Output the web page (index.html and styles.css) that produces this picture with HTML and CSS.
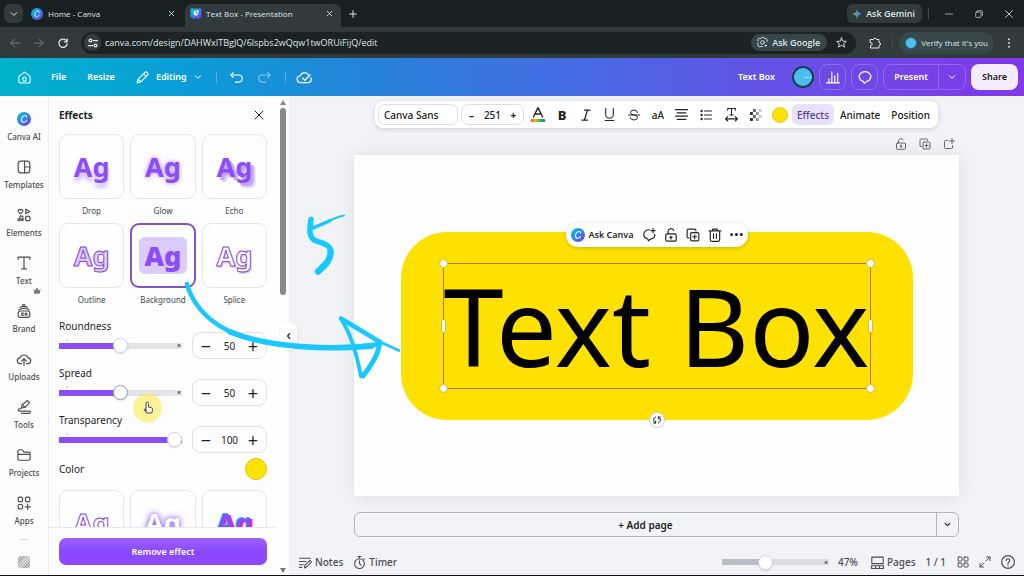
FILE: index.html
```html
<!DOCTYPE html>
<html lang="en">
<head>
<meta charset="utf-8">
<title>Text Box - Presentation</title>
<link rel="stylesheet" href="styles.css">
</head>
<body>
<svg class="defs" aria-hidden="true">
  <defs>
    <linearGradient id="brand" x1="0" y1="0" x2="1" y2="1"><stop offset="0" stop-color="#00c9d6"/><stop offset=".5" stop-color="#2f86f0"/><stop offset="1" stop-color="#7d2ae8"/></linearGradient>
    <linearGradient id="rainbow"><stop offset="0" stop-color="#ff3b30"/><stop offset=".3" stop-color="#ffb400"/><stop offset=".6" stop-color="#3fc34a"/><stop offset="1" stop-color="#2563ff"/></linearGradient>
    <linearGradient id="gem"><stop offset="0" stop-color="#f0654a"/><stop offset=".4" stop-color="#5aa05c"/><stop offset=".6" stop-color="#4a8df8"/><stop offset="1" stop-color="#4a8df8"/></linearGradient>
    <symbol id="canva" viewBox="0 0 24 24"><circle cx="12" cy="12" r="12" fill="url(#brand)" stroke="none"/><path d="M16.500 9c.4-2-1-3.300-3-3.100-3.400.300-6 4-5.700 7.600.200 2.600 1.700 4.200 3.900 4.100 2-.1 3.600-1.400 4.600-3.200" stroke="#fff" stroke-width="1.800" fill="none"/></symbol>
    <symbol id="close" viewBox="0 0 24 24"><path d="M4 4l16 16M20 4L4 20"/></symbol>
    <symbol id="down" viewBox="0 0 24 24"><path d="M4 8l8 8 8-8"/></symbol>
    <symbol id="lock" viewBox="0 0 24 24"><rect x="3" y="10" width="18" height="12.500" rx="2"/><path d="M7 10V6a5 5 0 0 1 9.500-2M12 14v5M10 16h4"/></symbol>
    <symbol id="copy" viewBox="0 0 24 24"><rect x="8" y="8" width="14" height="14" rx="2"/><path d="M5 17H4a2 2 0 0 1-2-2V4a2 2 0 0 1 2-2h11a2 2 0 0 1 2 2v1M15 11.500v7M11.500 15h7"/></symbol>
  </defs>
</svg>
<div class="window">
  <div class="tabs">
    <button class="tab-menu" aria-label="Search tabs"><svg class="i8 bold"><use href="#down"/></svg></button>
    <div class="tab"><svg class="i12"><use href="#canva"/></svg><span>Home - Canva</span><button aria-label="Close tab"><svg class="i7 bold"><use href="#close"/></svg></button></div>
    <div class="tab current"><svg class="i12" viewBox="0 0 24 24"><path d="M3 1h18a2 2 0 0 1 2 2v14a2 2 0 0 1-2 2h-3l1 4-7-3-7 3 1-4H3a2 2 0 0 1-2-2V3a2 2 0 0 1 2-2z" fill="url(#brand)" stroke="none"/><path d="M11 5a5 5 0 1 0 6 6h-6z M13 4v5h5a5 5 0 0 0-5-5z" fill="#fff" stroke="none"/></svg><span>Text Box - Presentation</span><button aria-label="Close tab"><svg class="i7 bold"><use href="#close"/></svg></button></div>
    <button class="new-tab" aria-label="New tab"><svg class="i8 bold" viewBox="0 0 24 24"><path d="M12 2v20M2 12h20"/></svg></button>
    <button class="gemini"><svg class="i10" viewBox="0 0 24 24"><path d="M12 0c1 7 5 11 12 12-7 1-11 5-12 12-1-7-5-11-12-12C7 11 11 7 12 0z" fill="url(#gem)" stroke="none"/></svg>Ask Gemini</button>
    <i class="sep"></i>
    <div class="win-buttons">
      <button aria-label="Minimize"><svg class="i8" viewBox="0 0 24 24"><path d="M1 12h22"/></svg></button>
      <button aria-label="Restore"><svg class="i8" viewBox="0 0 24 24"><rect x="2" y="6" width="16" height="16" rx="3"/><path d="M7 2h11a4 4 0 0 1 4 4v11"/></svg></button>
      <button aria-label="Close"><svg class="i10"><use href="#close"/></svg></button>
    </div>
  </div>
  <div class="address">
    <div class="nav">
      <button class="off" aria-label="Back"><svg class="i10" viewBox="0 0 24 24"><path d="M23 12H2M11 3l-9 9 9 9"/></svg></button>
      <button class="off" aria-label="Forward"><svg class="i10" viewBox="0 0 24 24"><path d="M1 12h21M13 3l9 9-9 9"/></svg></button>
      <button aria-label="Reload"><svg class="i10 bold" viewBox="0 0 24 24"><path d="M21 8a10 10 0 1 0 1 6M22 2v7h-7"/></svg></button>
    </div>
    <div class="omnibox">
      <button class="site" aria-label="Site information"><svg class="i10 bold" viewBox="0 0 24 24"><circle cx="6" cy="6" r="3.500"/><path d="M13 6h10M1 18h10"/><circle cx="18" cy="18" r="3.500"/></svg></button>
      <input type="text" aria-label="Address" value="canva.com/design/DAHWxITBgJQ/6lspbs2wQqw1twORUiFijQ/edit">
      <button class="ask-google"><svg class="i11" viewBox="0 0 24 24"><path d="M8 3l2-2h4l2 2M2 9V6a3 3 0 0 1 3-3h3M16 3h3a3 3 0 0 1 3 3v4M2 13v5a3 3 0 0 0 3 3h7"/><circle cx="12" cy="12" r="4"/><circle cx="19" cy="19" r="1.500"/></svg>Ask Google</button>
      <button class="star" aria-label="Bookmark"><svg class="i11" viewBox="0 0 24 24"><path d="M12 2l3 7 7.500.600-5.700 5 1.700 7.400L12 18l-6.500 4 1.700-7.400-5.700-5L9 9z"/></svg></button>
    </div>
    <button class="puzzle" aria-label="Extensions"><svg class="i12" viewBox="0 0 24 24"><path d="M3 5h6a3 2.500 0 0 1 6 0h5v6a3 3 0 0 1 0 6v5H3v-5a3.500 3 0 0 0 0-6z"/></svg></button>
    <i class="sep"></i>
    <button class="verify"><i class="mini-avatar"></i>Verify that it's you</button>
    <button class="menu" aria-label="Menu"><svg class="i10" viewBox="0 0 24 24"><g fill="currentColor" stroke="none"><circle cx="12" cy="3" r="2.200"/><circle cx="12" cy="12" r="2.200"/><circle cx="12" cy="21" r="2.200"/></g></svg></button>
  </div>

  <header class="topbar">
    <button class="home" aria-label="Home"><svg class="i13" viewBox="0 0 24 24"><path d="M12 2L3 8.500Q1.500 10 1.500 12v7a3 3 0 0 0 3 3h15a3 3 0 0 0 3-3v-7q0-2-1.500-3.500z"/><rect x="9" y="11" width="6" height="8" rx="3"/></svg></button>
    <button class="file">File</button>
    <button class="resize">Resize</button>
    <button class="editing"><svg class="i13" viewBox="0 0 24 24"><path d="M2 22l2-7L17 2q2-1 4 1t1 4L9 20zM14 5l5 5M4 15l5 5"/></svg>Editing<svg class="i8 bold"><use href="#down"/></svg></button>
    <i class="sep"></i>
    <button class="undo" aria-label="Undo"><svg class="i13" viewBox="0 0 24 24"><path d="M6 3L1.500 7.500 6 12M1.500 7.500H16a6 6 0 0 1 0 13h-6"/></svg></button>
    <button class="redo" aria-label="Redo"><svg class="i13" viewBox="0 0 24 24"><path d="M18 3l4.500 4.500L18 12M22.500 7.500H8a6 6 0 0 0 0 13h6"/></svg></button>
    <i class="sep"></i>
    <button class="saved" aria-label="Saved"><svg class="i15" viewBox="0 0 24 24"><path d="M18.500 8A7.500 7.500 0 0 0 5 9.500 5.200 5.200 0 0 0 6 20h12a5 5 0 0 0 4.500-7M9 13l3.500 3.500L21 8"/></svg></button>
    <span class="doc-title">Text Box</span>
    <button class="avatar" aria-label="Account"></button>
    <button class="outlined" aria-label="Insights"><svg class="i14" viewBox="0 0 24 24"><path d="M1 22h22M5 22v-7M10 22V3M15 22V10M20 22V6"/></svg></button>
    <button class="outlined" aria-label="Comments"><svg class="i14" viewBox="0 0 24 24"><path d="M9 19.500a10 8.500 0 1 1 6 0l-4 3.500z"/></svg></button>
    <div class="present"><button>Present</button><button aria-label="Present options"><svg class="i8 bold"><use href="#down"/></svg></button></div>
    <button class="share">Share</button>
  </header>

  <div class="workspace">
    <nav class="rail">
      <button><svg class="i14"><use href="#canva"/></svg>Canva AI</button>
      <button><svg class="i14" viewBox="0 0 24 24"><rect x="2" y="2" width="20" height="20" rx="5"/><path d="M13 2v20M13 12h9"/></svg>Templates</button>
      <button><svg class="i14" viewBox="0 0 24 24"><path d="M6 10L2.500 6.500a2.300 2.300 0 0 1 3.500-3 2.300 2.300 0 0 1 3.500 3zM15 2l7 4-7 4zM5 20v-6h5v6"/><circle cx="3.500" cy="20" r="2"/><circle cx="9" cy="20" r="1.500"/><circle cx="18.500" cy="18" r="4"/></svg>Elements</button>
      <button><svg class="i14" viewBox="0 0 24 24"><path d="M2 6V2h20v4M12 2v20M8 22h8"/></svg>Text</button>
      <button class="pro"><svg class="i14" viewBox="0 0 24 24"><rect x="2" y="12" width="20" height="11" rx="4"/><path d="M3 10q9-5 18 0M5 6q7-4 13 0M9 2q3-2 5 0M11 16a2 2 0 1 0 0 3"/><circle cx="15.500" cy="17.500" r="1.800"/></svg>Brand<svg class="crown i8" viewBox="0 0 24 24"><path d="M1 5l5 6 6-10 6 10 5-6-3 15H4z" fill="currentColor" stroke="none"/></svg></button>
      <button><svg class="i14" viewBox="0 0 24 24"><path d="M8 20H6a5 5 0 0 1-1-10 7.500 7.500 0 0 1 14 0 5 5 0 0 1-1 10h-2M12 23V12M8 15.500l4-4 4 4"/></svg>Uploads</button>
      <button><svg class="i14" viewBox="0 0 24 24"><path d="M7 14l2-6 9-7 3.500 3.500-8 8zM9 8l5 5M6 15H4a2 2 0 0 0 0 4h17a2 2 0 0 1 0 4H8"/></svg>Tools</button>
      <button><svg class="i14" viewBox="0 0 24 24"><path d="M1.500 18V6a3 3 0 0 1 3-3H9l3 4h7.500a3 3 0 0 1 3 3v8a3 3 0 0 1-3 3h-15a3 3 0 0 1-3-3zM2 11h20"/></svg>Projects</button>
      <button><svg class="i14" viewBox="0 0 24 24"><rect x="2" y="2" width="7.500" height="7.500" rx="2"/><rect x="14.500" y="2" width="7.500" height="7.500" rx="2"/><rect x="2" y="14.500" width="7.500" height="7.500" rx="2"/><path d="M18.200 14v9M14 18.500h9"/></svg>Apps</button>
      <i class="rail-line"></i>
      <i class="hatch"></i>
    </nav>

    <aside class="panel">
      <div class="panel-main">
        <div class="panel-head"><h2>Effects</h2><button aria-label="Close"><svg class="i12"><use href="#close"/></svg></button></div>
        <div class="panel-scroll">
          <div class="tiles">
            <button><span class="tile drop">Ag</span>Drop</button>
            <button><span class="tile glow">Ag</span>Glow</button>
            <button><span class="tile echo">Ag</span>Echo</button>
            <button><span class="tile outline">Ag</span>Outline</button>
            <button class="selected"><span class="tile back"><b>Ag</b></span>Background</button>
            <button><span class="tile splice">Ag</span>Splice</button>
          </div>
          <div class="controls">
            <div class="control"><div><label for="round">Roundness</label><input id="round" type="range" value="50" style="--v:50%"></div><div class="stepper"><button aria-label="Less roundness">&#8722;</button><input type="text" aria-label="Roundness value" value="50"><button aria-label="More roundness">+</button></div></div>
            <div class="control"><div><label for="spread">Spread</label><input id="spread" class="focus" type="range" value="50" style="--v:50%"></div><div class="stepper"><button aria-label="Less spread">&#8722;</button><input type="text" aria-label="Spread value" value="50"><button aria-label="More spread">+</button></div></div>
            <div class="control"><div><label for="transp">Transparency</label><input id="transp" type="range" value="100" style="--v:100%"></div><div class="stepper"><button aria-label="Less transparency">&#8722;</button><input type="text" aria-label="Transparency value" value="100"><button aria-label="More transparency">+</button></div></div>
          </div>
          <div class="color-row"><span>Color</span><button class="swatch" aria-label="Effect color"></button></div>
          <div class="tiles">
            <button aria-label="Hollow"><span class="tile hollow">Ag</span></button>
            <button aria-label="Neon"><span class="tile neon">Ag</span></button>
            <button aria-label="Glitch"><span class="tile glitch">Ag</span></button>
          </div>
        </div>
        <div class="panel-foot"><button>Remove effect</button></div>
      </div>
      <div class="scrollbar"><i class="up"></i><i class="thumb"></i><i class="dn"></i></div>
      <button class="collapse" aria-label="Collapse panel"><svg class="i8 heavy" viewBox="0 0 24 24"><path d="M14 5l-6 7 6 7"/></svg></button>
    </aside>

    <main class="editor">
      <div class="format">
        <button class="font">Canva Sans</button>
        <div class="size"><button aria-label="Smaller">&#8211;</button><input type="text" aria-label="Font size" value="251"><button aria-label="Larger">+</button></div>
        <button class="tool" aria-label="Text color"><svg class="i16" viewBox="0 0 24 24"><path d="M5 15l7-14 7 14M7.500 10.500h9"/><rect x="1" y="18" width="22" height="4.500" rx="2" fill="url(#rainbow)" stroke="none"/></svg></button>
        <button class="tool b">B</button>
        <button class="tool" aria-label="Italic"><svg class="i12" viewBox="0 0 24 24"><path d="M9 2h11M4 22h11M15 2L9 22" stroke-width="2.500"/></svg></button>
        <button class="tool" aria-label="Underline"><svg class="i13" viewBox="0 0 24 24"><path d="M5 1v11a7 7 0 0 0 14 0V1M4 23h16"/></svg></button>
        <button class="tool" aria-label="Strikethrough"><svg class="i12" viewBox="0 0 24 24"><path d="M19 7q-1-5-7-5-7 0-7 5 0 4 7 5t7 5q0 5-7 5-6 0-8-5M1 12h22"/></svg></button>
        <button class="tool">aA</button>
        <button class="tool" aria-label="Align"><svg class="i13" viewBox="0 0 24 24"><path d="M1 3h22M4 9h16M1 15h22M4 21h16"/></svg></button>
        <button class="tool" aria-label="List"><svg class="i12" viewBox="0 0 24 24"><path d="M9 4h14M9 12h14M9 20h14"/><g fill="currentColor"><circle cx="3" cy="4" r="1.500"/><circle cx="3" cy="12" r="1.500"/><circle cx="3" cy="20" r="1.500"/></g></svg></button>
        <button class="tool spacing" aria-label="Spacing"><svg class="i13" viewBox="0 0 24 24"><path d="M5 4V1h14v3M12 1v12M9 13h6M1 20h22M5 16l-4 4 4 4M19 16l4 4-4 4"/></svg></button>
        <button class="tool" aria-label="Transparency"><i class="checker"></i></button>
        <button class="tool" aria-label="Background color"><i class="dot"></i></button>
        <button class="word on">Effects</button>
        <button class="word">Animate</button>
        <button class="word">Position</button>
      </div>

      <div class="stage">
        <div class="page-tools">
          <button aria-label="Lock page"><svg class="i12"><use href="#lock"/></svg></button>
          <button aria-label="Duplicate page"><svg class="i12"><use href="#copy"/></svg></button>
          <button aria-label="Add page"><svg class="i12" viewBox="0 0 24 24"><path d="M9 5H5a2 2 0 0 0-2 2v12a2 2 0 0 0 2 2h12a2 2 0 0 0 2-2v-4M18 1v10M13 6h10"/></svg></button>
        </div>
        <section class="page">
          <div class="text-back">
            <div class="frame">Text Box<i class="k nw"></i><i class="k ne"></i><i class="k sw"></i><i class="k se"></i><i class="k w"></i><i class="k e"></i></div>
            <div class="floating">
              <button class="ask"><svg class="i14"><use href="#canva"/></svg>Ask Canva</button>
              <button aria-label="Comment"><svg class="i14" viewBox="0 0 24 24"><path d="M13 3a9 8 0 0 0-5 15l2 1 1 3 4-3a9 8 0 0 0 7-8M19 1v7M15.500 4.500h7"/></svg></button>
              <button aria-label="Lock"><svg class="i14"><use href="#lock"/></svg></button>
              <button aria-label="Duplicate"><svg class="i14"><use href="#copy"/></svg></button>
              <button aria-label="Delete"><svg class="i14" viewBox="0 0 24 24"><path d="M2 5h20M8 5V2h8v3M4 5v15a3 3 0 0 0 3 3h10a3 3 0 0 0 3-3V5M9.500 10v8M14.500 10v8"/></svg></button>
              <button aria-label="More"><svg class="i13" viewBox="0 0 24 24"><g fill="currentColor" stroke="none"><circle cx="3" cy="12" r="2.800"/><circle cx="12" cy="12" r="2.800"/><circle cx="21" cy="12" r="2.800"/></g></svg></button>
            </div>
            <button class="rotate" aria-label="Rotate"><svg class="i8 bold" viewBox="0 0 24 24"><path d="M8 3C0 7 0 17 7 21M2 21h6v-6M16 21c8-4 8-14 1-18M22 3h-6v6"/></svg></button>
          </div>
        </section>
        <div class="add-page"><button>+ Add page</button><button aria-label="Page types"><svg class="i7 heavy"><use href="#down"/></svg></button></div>
      </div>

      <footer class="status">
        <button><svg class="i13" viewBox="0 0 24 24"><path d="M1 4h20M1 10h12M1 16h7M1 21h4M10 22l1-5 9-9 3 3-9 9z"/></svg>Notes</button>
        <button class="timer"><svg class="i13" viewBox="0 0 24 24"><circle cx="12" cy="14" r="9"/><path d="M9 1h6M12 1v4M12 9v5l3 3M20 5l1 1"/></svg>Timer</button>
        <input class="zoom" type="range" value="39" aria-label="Zoom" style="--v:40%">
        <span class="percent">47%</span>
        <button class="pages"><svg class="i13" viewBox="0 0 24 24"><rect x="1.500" y="2" width="21" height="12"/><path d="M1 18h22v5H1zM8.500 18v5M15.500 18v5"/></svg>Pages</button>
        <span class="count">1 / 1</span>
        <button class="grid" aria-label="Grid view"><svg class="i12" viewBox="0 0 24 24"><rect x="2" y="2" width="8" height="8" rx="1.500"/><rect x="14" y="2" width="8" height="8" rx="1.500"/><rect x="2" y="14" width="8" height="8" rx="1.500"/><rect x="14" y="14" width="8" height="8" rx="1.500"/></svg></button>
        <button class="full" aria-label="Full screen"><svg class="i12" viewBox="0 0 24 24"><path d="M14 10l8-8M15 2h7v7M10 14l-8 8M2 15v7h7"/></svg></button>
        <button class="help" aria-label="Help"><svg class="i14" viewBox="0 0 24 24"><circle cx="12" cy="12" r="11"/><path d="M9 9.500a3 3 0 1 1 4.500 2.600Q12 13 12 14.500M12 17v1.500"/></svg></button>
      </footer>
    </main>
  </div>

  <svg class="ink" viewBox="0 0 1024 576" aria-hidden="true">
    <circle cx="147.500" cy="408" r="14.500" fill="#f8ea3c" fill-opacity=".55" stroke="none"/>
    <path d="M146 411v-7.500q0-1.500 1.200-1.500t1.200 1.500v3.500l3.200.800q1.200.400 1 1.800l-.8 3.400h-5l-2.800-3.500q0-1 2 .500z" fill="#fff" stroke="#333" stroke-width=".9"/>
    <g fill="none" stroke="#18c8ff" stroke-linecap="round" stroke-linejoin="round">
      <path d="M187 284C191 300 204 318 225 329C262 348 330 351 380 344" stroke-width="4.500"/>
      <path d="M230 332C270 348 330 350 372 346" stroke-width="5.500"/>
      <path d="M341 318.500L380 342" stroke-width="4.500"/>
      <path d="M378 341l21 9.500" stroke-width="2.800"/>
      <path d="M341 319C351 334 356 352 361 376" stroke-width="3.800"/>
      <path d="M379 345Q379 355 363 376" stroke-width="5"/>
      <path d="M311 219.500C309.500 229 308.500 237 315 240.500C322 243.500 331 244 331 253" stroke-width="5.500"/>
      <path d="M330.500 252C331 260 325 265 318 271.500" stroke-width="6.500"/>
      <path d="M313 228Q325 223 330 220.500" stroke-width="3.600"/>
      <path d="M328 221.500Q338 216.500 344 215.500" stroke-width="1.800"/>
    </g>
  </svg>
</div>
</body>
</html>
```
FILE: styles.css
```css
* { box-sizing: border-box; }
body { margin: 0; font: 9px/12px "Noto Sans", "Open Sans", sans-serif; color: #1d1f24; background: #f2f3f6; }
button, input { font: inherit; color: inherit; background: none; border: 0; padding: 0; margin: 0; min-width: 0; }
button { display: inline-flex; align-items: center; justify-content: center; white-space: nowrap; flex: none; }
h2 { margin: 0; font-size: 10px; font-weight: 700; }
svg { fill: none; stroke: currentColor; stroke-width: 2; stroke-linecap: round; stroke-linejoin: round; flex: none; overflow: visible; }
.defs { position: absolute; width: 0; height: 0; }
.bold { stroke-width: 3; }
.heavy { stroke-width: 4; }
.i7 { width: 7px; height: 7px; }
.i8 { width: 8px; height: 8px; }
.i10 { width: 10px; height: 10px; }
.i11 { width: 11px; height: 11px; }
.i12 { width: 12px; height: 12px; }
.i13 { width: 13px; height: 13px; }
.i14 { width: 14px; height: 14px; }
.i15 { width: 15px; height: 15px; }
.i16 { width: 16px; height: 16px; }

.window { position: relative; display: flex; flex-direction: column; height: 100vh; overflow: hidden; border-bottom: 1px solid #111; }
.sep { width: 1px; height: 11px; flex: none; background: #3f4a4e; }

/* Browser chrome */
.tabs { display: flex; align-items: center; height: 27px; flex: none; background: #182022; color: #dfe4e5; font-family: "Open Sans", sans-serif; padding-left: 4px; }
.tab-menu { width: 19px; height: 19px; border-radius: 6px; background: #313b3e; margin-right: 2px; }
.tab { display: flex; align-items: center; align-self: flex-end; width: 160px; height: 23px; padding: 0 10px 4px 6px; gap: 5px; font-size: 8px; }
.tab span { flex: 1; }
.tab.current { width: 156px; padding: 0 8px 4px 5px; gap: 4px; background: #313b3e; border-radius: 7px 7px 0 0; }
.new-tab { width: 24px; height: 20px; }
.gemini { height: 19px; margin-left: auto; padding: 0 7px 0 5px; gap: 4px; border-radius: 6px; background: #313b3e; font-weight: 600; }
.tabs .sep { margin: 0 5px 0 6px; }
.win-buttons { display: flex; }
.win-buttons button { width: 30px; height: 20px; }

.address { display: flex; align-items: center; height: 31px; flex: none; background: #313b3e; color: #dfe4e5; font-family: "Open Sans", sans-serif; padding-left: 3px; }
.nav { display: flex; margin-right: 6px; }
.nav button { width: 24px; height: 22px; }
.nav .off { color: #7d8789; }
.omnibox { display: flex; align-items: center; flex: 1; height: 22px; border-radius: 11px; background: #1b2325; padding: 0 8px 0 3px; }
.site { width: 17px; height: 17px; border-radius: 50%; background: #333d40; margin-right: 4px; }
.omnibox input { flex: 1; font-size: 9px; height: 18px; }
.ask-google { height: 17px; border-radius: 9px; padding: 0 7px 0 6px; gap: 4px; background: #364649; font-weight: 600; }
.star { width: 14px; margin-left: 7px; }
.puzzle { width: 14px; margin: 0 10px 0 12px; }
.verify { height: 22px; border-radius: 11px; background: #38474a; font-size: 8px; gap: 4px; padding: 0 6px; margin-left: 6px; }
.mini-avatar { width: 12px; height: 12px; border-radius: 50%; background: #4cc0f5; border: 1px solid #28627a; }
.menu { width: 30px; height: 22px; }

/* Editor header */
.topbar { display: flex; align-items: center; height: 38px; flex: none; padding: 0 6px 0 12px; color: #fff; font-weight: 600; background: linear-gradient(90deg, #00b3cb 0%, #0a9dd8 18%, #2485da 35%, #4c67e4 60%, #6b4ce8 80%, #8138e9 100%); }
.home { width: 24px; margin-right: 15px; }
.resize { margin-left: 21px; }
.editing { margin-left: 21px; gap: 7px; }
.topbar .sep { background: #ffffff44; margin: 0 13px 0 14px; }
.topbar .redo + .sep { margin-right: 12px; }
.undo { margin-right: 15px; }
.redo { opacity: .5; }
.saved { width: 14px; }
.doc-title { margin-left: auto; margin-right: 17px; }
.avatar { width: 22px; height: 22px; border-radius: 50%; border: 2px solid #17414c; background: linear-gradient(90deg, transparent 55%, #9adcfb 55%) center / 100% 1px no-repeat #4bbdf3; }
.outlined { width: 27px; height: 26px; border: 1px solid #ffffff33; border-radius: 8px; margin-left: 5px; }
.present { display: flex; height: 26px; border: 1px solid #ffffff33; border-radius: 8px; margin: 0 5px; }
.present button { width: 26px; }
.present button:first-child { width: 55px; border-right: 1px solid #ffffff33; }
.share { width: 47px; height: 26px; border-radius: 8px; background: #f3ecfd; color: #1a1726; }

.workspace { display: flex; flex: 1; min-height: 0; }

/* Side rail */
.rail { display: flex; flex-direction: column; align-items: center; width: 49px; flex: none; overflow: hidden; padding-top: 10px; background: #fcfcfd; border-right: 1px solid #e9eaee; color: #4b4e54; font-size: 8px; font-weight: 500; }
.rail button { position: relative; flex-direction: column; justify-content: flex-start; width: 48px; height: 48px; padding-top: 6px; gap: 5px; }
.rail .crown { position: absolute; top: -11px; right: 7px; color: #777; }
.rail-line { width: 8px; height: 1px; flex: none; margin-top: 1px; background: #d5d6da; }
.hatch { width: 12px; height: 12px; flex: none; margin-top: 16px; border-radius: 2px; background: repeating-linear-gradient(135deg, #aaa 0 1px, #dedede 1px 2px); }

/* Effects panel */
.panel { position: relative; display: flex; width: 240px; flex: none; background: #fdfdfe; }
.panel-main { display: flex; flex-direction: column; flex: 1; min-width: 0; }
.panel-head { display: flex; align-items: center; justify-content: space-between; height: 38px; flex: none; padding: 0 12px 0 10px; }
.panel-scroll { flex: 1; min-height: 0; overflow: hidden; padding: 0 10px; }
.tiles { display: grid; grid-template-columns: repeat(3, 1fr); gap: 6px; color: #45484e; font-size: 8px; }
.tiles button { flex-direction: column; gap: 6px; }
.tile { display: flex; align-items: center; justify-content: center; width: 100%; height: 65px; border: 1px solid #e6e7eb; border-radius: 9px; background: #fefefe; font: 700 27px/37px "Noto Sans", sans-serif; color: #8b4dfb; }
.drop { text-shadow: 0 5px 4px #8b4dfb66; }
.glow { text-shadow: 0 0 5px #8b4dfbaa; }
.echo { text-shadow: 3px 3px 0 #c3a5fd, 5px 5px 0 #e0d2fe; }
.outline { color: #dccbfd; -webkit-text-stroke: 1px #8347e0; }
.splice, .hollow { color: #fff; -webkit-text-stroke: 1px #8347e0; text-shadow: 1px 2px 0 #dccbfd; }
.hollow { text-shadow: none; }
.neon { color: #fff; text-shadow: 0 0 3px #8b4dfb99, 0 0 7px #8b4dfb; }
.glitch { text-shadow: -1px -1px 0 #27c8e8, 2px 1px 0 #ff20cf; }
.selected .tile { border: 2px solid #8352c9; }
.back b { width: 48px; height: 37px; border-radius: 6px; background: #dccbfd; }
.controls { display: flex; flex-direction: column; gap: 8px; margin-top: 14px; font-size: 10px; }
.control { display: flex; align-items: flex-end; gap: 10px; height: 39px; }
.control > div:first-child { position: relative; flex: 1; display: flex; flex-direction: column; gap: 6px; align-self: flex-start; }
.control > div:first-child::before { content: ""; position: absolute; left: 7px; top: 19px; width: 2px; height: 2px; border-radius: 50%; background: #ccc; }
.control label { line-height: 12px; }
input[type=range] { appearance: none; display: block; width: 100%; height: 15px; background: radial-gradient(circle at calc(100% - 3px) 50%, #777 1px, transparent 2px), linear-gradient(90deg, #8b4dfb var(--v), #e3e4e8 var(--v)) center / 100% 6px no-repeat; border-radius: 3px; }
input[type=range]::-webkit-slider-thumb { appearance: none; width: 15px; height: 15px; border-radius: 50%; background: #fff; border: 1px solid #d5d6dc; box-shadow: 0 1px 2px #0002; }
input.focus::-webkit-slider-thumb { border-color: #9a9ca2; }
.stepper { display: flex; align-items: center; justify-content: space-between; width: 75px; height: 27px; border: 1px solid #dfe0e5; border-radius: 9px; padding: 0 3px; }
.stepper button { width: 20px; height: 20px; font-size: 18px; }
.stepper input { width: 24px; text-align: center; }
.color-row { display: flex; align-items: center; justify-content: space-between; font-size: 10px; height: 22px; margin: 5px 0 10px; }
.swatch { width: 22px; height: 22px; border-radius: 50%; background: #ffe100; border: 1px solid #dcc61b; }
.panel-foot { flex: none; padding: 10px; border-top: 1px solid #e9eaee; }
.panel-foot button { width: 100%; height: 27px; border-radius: 7px; color: #fff; font-weight: 600; background: linear-gradient(#9a62fb, #8b48fd 50%); }
.scrollbar { display: flex; flex-direction: column; align-items: center; width: 12px; flex: none; padding: 4px 0 2px; }
.up, .dn { border: 3px solid transparent; border-top: 0; border-bottom: 5px solid #888; }
.dn { border-bottom: 0; border-top: 5px solid #777; margin-top: auto; }
.thumb { width: 6px; height: 187px; border-radius: 3px; background: #898989; margin-top: 3px; }
.collapse { position: absolute; right: -8px; top: 226px; width: 17px; height: 28px; border-radius: 8px; background: #fff; box-shadow: 0 1px 4px #0001; z-index: 2; }

/* Canvas */
.editor { display: flex; flex-direction: column; flex: 1; min-width: 0; background: #f2f3f6; }
.format { display: flex; align-items: center; align-self: center; height: 27px; margin: 5px 0 8px; padding: 0 3px; border-radius: 8px; background: #fff; box-shadow: 0 1px 5px #3a3a6a33; font-weight: 500; color: #222; font-size: 10px; }
.font { width: 80px; height: 21px; border: 1px solid #dfe0e5; border-radius: 7px; justify-content: flex-start; padding-left: 5px; margin-right: 3px; }
.size { display: flex; align-items: center; width: 63px; height: 21px; border: 1px solid #dfe0e5; border-radius: 7px; margin-right: 2px; }
.size button { width: 19px; font-weight: 700; }
.size input { flex: 1; width: 23px; text-align: center; }
.tool { width: 24px; height: 21px; }
.b { font-size: 13px; font-weight: 800; }
.spacing { margin-left: 2px; }
.checker { width: 12px; height: 12px; background: linear-gradient(90deg, transparent, #ffffffe0), repeating-conic-gradient(#222 0 25%, #fff 0 50%) 0 0 / 6px 6px; }
.dot { width: 16px; height: 16px; border-radius: 50%; background: #ffe100; border: 1px solid #e0ca1e; }
.word { height: 21px; padding: 0 5px; border-radius: 6px; margin-left: 1px; }
.word.on { background: #e9e0fb; color: #57408f; margin-left: 0; }
.stage { display: flex; flex-direction: column; flex: 1; padding: 0 65px; min-height: 0; }
.page-tools { display: flex; justify-content: flex-end; gap: 12px; height: 19px; padding: 2px 4px 0 0; align-items: flex-start; color: #66696f; }
.page { display: grid; place-items: center; flex: none; height: 341px; background: #fefefe; box-shadow: 0 0 16px #3a3a7a1c; }
.text-back { position: relative; padding: 31px 42px; border-radius: 46px; background: #ffe100; }
.frame { position: relative; width: 428px; height: 126px; border: 1px solid #a77858; text-align: center; color: #000; font-size: 108px; line-height: 124px; white-space: nowrap; }
.k { position: absolute; width: 9px; height: 9px; border-radius: 50%; background: #fff; border: 1px solid #d5b83a; }
.nw { left: -5px; top: -5px; }
.ne { right: -5px; top: -5px; }
.sw { left: -5px; bottom: -5px; }
.se { right: -5px; bottom: -5px; }
.w, .e { width: 5px; height: 14px; border-radius: 3px; top: 55px; }
.w { left: -3px; }
.e { right: -3px; }
.floating { position: absolute; left: 50%; top: -9px; transform: translateX(-50%); display: flex; align-items: center; gap: 8px; height: 24px; padding: 0 5px; border-radius: 12px; background: #fff; box-shadow: 0 1px 4px #0003; color: #25272b; }
.ask { gap: 4px; font-weight: 600; }
.rotate { position: absolute; left: 50%; bottom: -8px; margin-left: -8px; width: 16px; height: 16px; border-radius: 50%; background: #fff; border: 1px solid #ccc; }
.add-page { display: flex; height: 25px; margin-top: 16px; border: 1px solid #b4b7bf; border-radius: 6px; font-size: 10px; font-weight: 600; }
.add-page button:first-child { flex: 1; }
.add-page button:last-child { width: 22px; border-left: 1px solid #b4b7bf; }

.status { display: flex; align-items: center; height: 26px; flex: none; padding: 0 9px 0 10px; font-size: 10px; font-weight: 500; color: #4a4d53; }
.status button { gap: 3px; }
.timer { margin-left: 10px; }
.status .zoom { width: 107px; margin-left: auto; background-image: radial-gradient(circle at calc(100% - 3px) 50%, #777 1px, transparent 2px), linear-gradient(90deg, #b9bdc8 var(--v), #d9dce1 var(--v)); }
.percent { margin-left: 9px; }
.pages { margin-left: 13px; }
.count { margin: 0 11px 0 10px; }
.full { margin: 0 10px; }

/* Screen annotations */
.ink { position: absolute; left: 0; top: 0; width: 1024px; height: 576px; pointer-events: none; z-index: 5; }
```
